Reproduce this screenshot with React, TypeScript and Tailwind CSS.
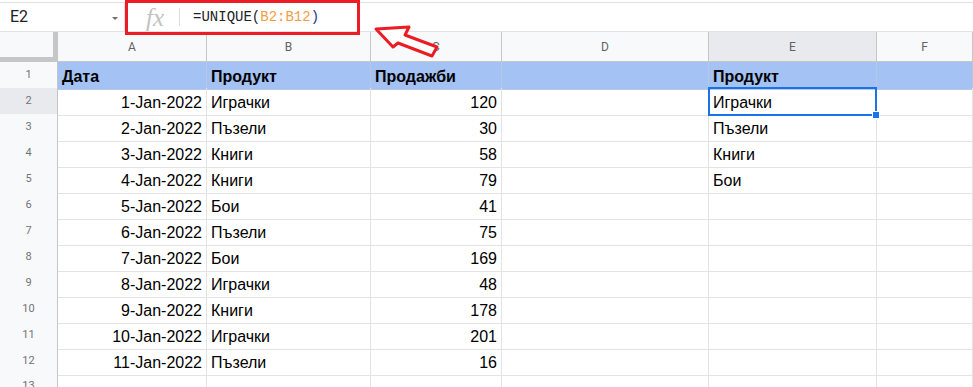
import React from "react";

// Google Sheets view: UNIQUE() formula example, with a red callout box and arrow.

const COLS = "grid grid-cols-[58px_149px_164px_131px_207px_168px_1fr]";
const LETTERS = ["A", "B", "C", "D", "E", "F"];

type Row = [string, string, string];

const DATA: Row[] = [
  ["1-Jan-2022", "Играчки", "120"],
  ["2-Jan-2022", "Пъзели", "30"],
  ["3-Jan-2022", "Книги", "58"],
  ["4-Jan-2022", "Книги", "79"],
  ["5-Jan-2022", "Бои", "41"],
  ["6-Jan-2022", "Пъзели", "75"],
  ["7-Jan-2022", "Бои", "169"],
  ["8-Jan-2022", "Играчки", "48"],
  ["9-Jan-2022", "Книги", "178"],
  ["10-Jan-2022", "Играчки", "201"],
  ["11-Jan-2022", "Пъзели", "16"],
];

const UNIQUE = ["Играчки", "Пъзели", "Книги", "Бои"];

function RowHead({ n, active }: { n: number; active?: boolean }) {
  return (
    <div
      className={`flex items-center justify-center border-r border-b border-r-[#c4c7c5] border-b-[#e0e0e0] font-['Roboto',sans-serif] text-[11px] text-[#70757a] ${
        active ? "bg-[#e8eaed]" : "bg-[#f8f9fa]"
      }`}
    >
      {n}
    </div>
  );
}

function Cell({
  children,
  right,
  bold,
  blue,
}: {
  children?: React.ReactNode;
  right?: boolean;
  bold?: boolean;
  blue?: boolean;
}) {
  return (
    <div
      className={`relative flex items-center overflow-visible whitespace-nowrap border-r border-b pt-[3px] text-[16px] text-black ${
        right ? "justify-end pr-[4px]" : "pl-[4px]"
      } ${bold ? "font-bold" : ""} ${
        blue ? "bg-[#a4c2f4] border-[#b6c8e6]" : "border-[#e2e3e3]"
      }`}
    >
      {children}
    </div>
  );
}

export default function App() {
  return (
    <div className="relative h-[387px] w-[973px] overflow-hidden bg-white font-['Liberation_Sans',Arial,sans-serif]">
      {/* Formula bar */}
      <div className="pt-[2px]">
        <div className="flex h-[30px] border-y border-[#e1e3e1]">
          <div className="flex w-[125px] items-center justify-between border-r border-[#e1e3e1] pl-[10px] pr-[6px]">
            <span className="font-['Roboto',sans-serif] text-[16px] text-[#202124]">E2</span>
            <span className="mt-[2px] h-0 w-0 border-x-[3px] border-t-[3px] border-x-transparent border-t-[#6b6f73]" />
          </div>
          <div className="flex flex-1 items-center pl-[21px]">
            <span className="font-['Liberation_Serif',serif] text-[25px] italic leading-none text-[#c2c2c2]">
              fx
            </span>
            <span className="ml-[15px] h-[18px] w-px bg-[#dadce0]" />
            <span className="ml-[13px] font-['Liberation_Mono',monospace] text-[14px] text-[#202124]">
              =UNIQUE(<span className="text-[#f39c43]">B2:B12</span>
              <span className="text-[#1e3a8a]">)</span>
            </span>
          </div>
        </div>
      </div>

      {/* Column headers */}
      <div className={`${COLS} h-[30px]`}>
        <div className="border-r-[5px] border-b-[5px] border-[#c4c7c5] bg-[#f8f9fa]" />
        {LETTERS.map((l) => (
          <div
            key={l}
            className={`flex items-center justify-center border-r border-b border-[#c4c7c5] font-['Roboto',sans-serif] text-[12px] text-[#5f6368] ${
              l === "E" ? "bg-[#e8eaed]" : "bg-[#f8f9fa]"
            }`}
          >
            {l}
          </div>
        ))}
      </div>

      {/* Row 1 */}
      <div className={`${COLS} h-[26px]`}>
        <RowHead n={1} />
        <Cell bold blue>Дата</Cell>
        <Cell bold blue>Продукт</Cell>
        <Cell bold blue>Продажби</Cell>
        <Cell blue />
        <Cell bold blue>Продукт</Cell>
        <Cell blue />
      </div>

      {DATA.map((r, i) => (
        <div key={i} className={`${COLS} h-[26px]`}>
          <RowHead n={i + 2} active={i === 0} />
          <Cell right>{r[0]}</Cell>
          <Cell>{r[1]}</Cell>
          <Cell right>{r[2]}</Cell>
          <Cell />
          <Cell>
            {UNIQUE[i]}
            {i === 0 && (
              <>
                <span className="absolute -inset-[1px] z-10 border-2 border-[#1a73e8]" />
                <span className="absolute -right-[4px] -bottom-[4px] z-10 h-[8px] w-[8px] border border-white bg-[#1a73e8]" />
              </>
            )}
          </Cell>
          <Cell />
        </div>
      ))}

      <div className={`${COLS} h-[26px]`}>
        <RowHead n={13} />
        <Cell />
        <Cell />
        <Cell />
        <Cell />
        <Cell />
        <Cell />
      </div>

      {/* Red callout box over the formula */}
      <div className="absolute left-[125px] top-0 z-20 h-[35px] w-[235px] border-[3px] border-[#ec1c24]" />

      {/* Red arrow pointing at the formula */}
      <svg className="absolute left-[360px] top-[15px] z-20" width="90" height="50" viewBox="0 0 90 50">
        <polygon
          points="16,14 49,12 45,20 77,32 72,41 38,28 33,32"
          fill="white"
          stroke="#ec1c24"
          strokeWidth="3"
          strokeLinejoin="round"
        />
      </svg>
    </div>
  );
}
